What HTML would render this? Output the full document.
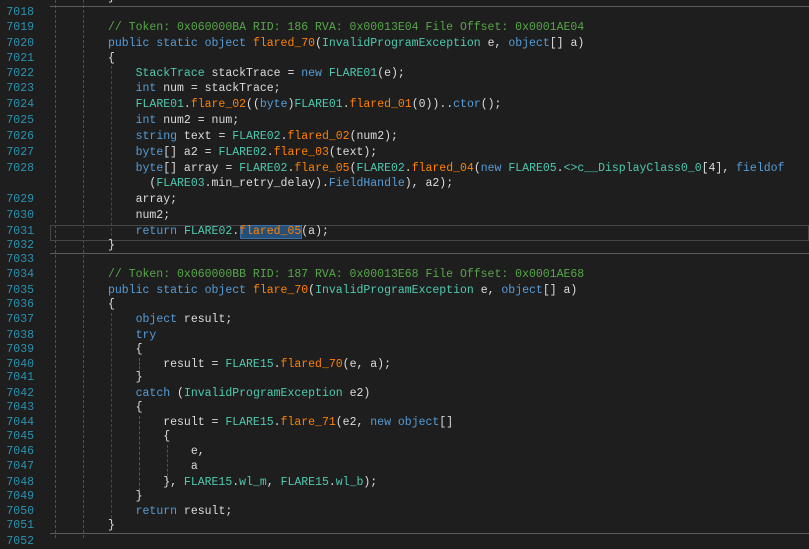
<!DOCTYPE html>
<html><head><meta charset="utf-8"><style>
body{margin:0;width:809px;height:538px;background:#1e1e1e;overflow:hidden;position:relative;font-family:"Liberation Mono",monospace;font-size:11.5px;color:#dcdcdc}
.l{position:absolute;left:0;height:15px;line-height:15px;white-space:pre;width:809px}
.n{position:absolute;left:0;width:34px;text-align:right;color:#2b91af}
.c{position:absolute;left:108px}
.k{color:#569cd6}.t{color:#4ec9b0}.m{color:#ff8000}.g{color:#57a64a}.f{color:#4ec9b0}
.sep{position:absolute;left:50px;right:0;height:1px;background:#5a5a5a}
.v{position:absolute;width:0;border-left:1px dashed #505050}
</style></head><body>
<div class="v" style="left:55px;top:0;height:538px"></div>
<div class="v" style="left:83px;top:0;height:538px;border-color:#3c5a4a"></div>
<div class="v" style="left:111px;top:66px;height:180px;border-color:#3a4a5a"></div>
<div class="v" style="left:111px;top:313px;height:210px;border-color:#3a4a5a"></div>
<div class="v" style="left:139px;top:358px;height:15px;border-color:#7a4a4a"></div>
<div class="v" style="left:139px;top:416px;height:80px;border-color:#7a4a4a"></div>
<div class="v" style="left:167px;top:445px;height:36px;border-color:#505050"></div>
<div class="sep" style="top:6px"></div>
<div class="sep" style="top:253px"></div>
<div class="sep" style="top:533px"></div>
<div style="position:absolute;left:50px;right:0;top:225px;height:14px;border:1px solid #464646"></div>
<div style="position:absolute;left:240px;top:225px;width:62px;height:14px;background:#264f78;border:1px solid #3a6ea5;box-sizing:border-box"></div>

<div class="l" style="top:-10px"><span class="n">7017</span><span class="c">}</span></div>
<div class="l" style="top:5px"><span class="n">7018</span></div>
<div class="l" style="top:20px"><span class="n">7019</span><span class="c g">// Token: 0x060000BA RID: 186 RVA: 0x00013E04 File Offset: 0x0001AE04</span></div>
<div class="l" style="top:36px"><span class="n">7020</span><span class="c"><span class="k">public static object</span> <span class="m">flared_70</span>(<span class="t">InvalidProgramException</span> e, <span class="k">object</span>[] a)</span></div>
<div class="l" style="top:51px"><span class="n">7021</span><span class="c">{</span></div>
<div class="l" style="top:66px"><span class="n">7022</span><span class="c">    <span class="t">StackTrace</span> stackTrace = <span class="k">new</span> <span class="t">FLARE01</span>(e);</span></div>
<div class="l" style="top:81px"><span class="n">7023</span><span class="c">    <span class="k">int</span> num = stackTrace;</span></div>
<div class="l" style="top:97px"><span class="n">7024</span><span class="c">    <span class="t">FLARE01</span>.<span class="m">flare_02</span>((<span class="k">byte</span>)<span class="t">FLARE01</span>.<span class="m">flared_01</span>(0))..<span class="k">ctor</span>();</span></div>
<div class="l" style="top:113px"><span class="n">7025</span><span class="c">    <span class="k">int</span> num2 = num;</span></div>
<div class="l" style="top:129px"><span class="n">7026</span><span class="c">    <span class="k">string</span> text = <span class="t">FLARE02</span>.<span class="m">flared_02</span>(num2);</span></div>
<div class="l" style="top:145px"><span class="n">7027</span><span class="c">    <span class="k">byte</span>[] a2 = <span class="t">FLARE02</span>.<span class="m">flare_03</span>(text);</span></div>
<div class="l" style="top:161px"><span class="n">7028</span><span class="c">    <span class="k">byte</span>[] array = <span class="t">FLARE02</span>.<span class="m">flare_05</span>(<span class="t">FLARE02</span>.<span class="m">flared_04</span>(<span class="k">new</span> <span class="t">FLARE05</span>.<span class="t">&lt;&gt;c__DisplayClass0_0</span>[4], <span class="k">fieldof</span></span></div>
<div class="l" style="top:176px"><span class="c">      (<span class="t">FLARE03</span>.min_retry_delay).<span class="k">FieldHandle</span>), a2);</span></div>
<div class="l" style="top:192px"><span class="n">7029</span><span class="c">    array;</span></div>
<div class="l" style="top:208px"><span class="n">7030</span><span class="c">    num2;</span></div>
<div class="l" style="top:224px"><span class="n">7031</span><span class="c">    <span class="k">return</span> <span class="t">FLARE02</span>.<span class="m">flared_05</span>(a);</span></div>
<div class="l" style="top:238px"><span class="n">7032</span><span class="c">}</span></div>
<div class="l" style="top:252px"><span class="n">7033</span></div>
<div class="l" style="top:267px"><span class="n">7034</span><span class="c g">// Token: 0x060000BB RID: 187 RVA: 0x00013E68 File Offset: 0x0001AE68</span></div>
<div class="l" style="top:283px"><span class="n">7035</span><span class="c"><span class="k">public static object</span> <span class="m">flare_70</span>(<span class="t">InvalidProgramException</span> e, <span class="k">object</span>[] a)</span></div>
<div class="l" style="top:297px"><span class="n">7036</span><span class="c">{</span></div>
<div class="l" style="top:312px"><span class="n">7037</span><span class="c">    <span class="k">object</span> result;</span></div>
<div class="l" style="top:328px"><span class="n">7038</span><span class="c">    <span class="k">try</span></span></div>
<div class="l" style="top:342px"><span class="n">7039</span><span class="c">    {</span></div>
<div class="l" style="top:357px"><span class="n">7040</span><span class="c">        result = <span class="t">FLARE15</span>.<span class="m">flared_70</span>(e, a);</span></div>
<div class="l" style="top:370px"><span class="n">7041</span><span class="c">    }</span></div>
<div class="l" style="top:386px"><span class="n">7042</span><span class="c">    <span class="k">catch</span> (<span class="t">InvalidProgramException</span> e2)</span></div>
<div class="l" style="top:400px"><span class="n">7043</span><span class="c">    {</span></div>
<div class="l" style="top:415px"><span class="n">7044</span><span class="c">        result = <span class="t">FLARE15</span>.<span class="m">flare_71</span>(e2, <span class="k">new object</span>[]</span></div>
<div class="l" style="top:429px"><span class="n">7045</span><span class="c">        {</span></div>
<div class="l" style="top:444px"><span class="n">7046</span><span class="c">            e,</span></div>
<div class="l" style="top:459px"><span class="n">7047</span><span class="c">            a</span></div>
<div class="l" style="top:475px"><span class="n">7048</span><span class="c">        }, <span class="t">FLARE15</span>.<span class="f">wl_m</span>, <span class="t">FLARE15</span>.<span class="f">wl_b</span>);</span></div>
<div class="l" style="top:489px"><span class="n">7049</span><span class="c">    }</span></div>
<div class="l" style="top:504px"><span class="n">7050</span><span class="c">    <span class="k">return</span> result;</span></div>
<div class="l" style="top:518px"><span class="n">7051</span><span class="c">}</span></div>
<div class="l" style="top:534px"><span class="n">7052</span></div>
</body></html>
